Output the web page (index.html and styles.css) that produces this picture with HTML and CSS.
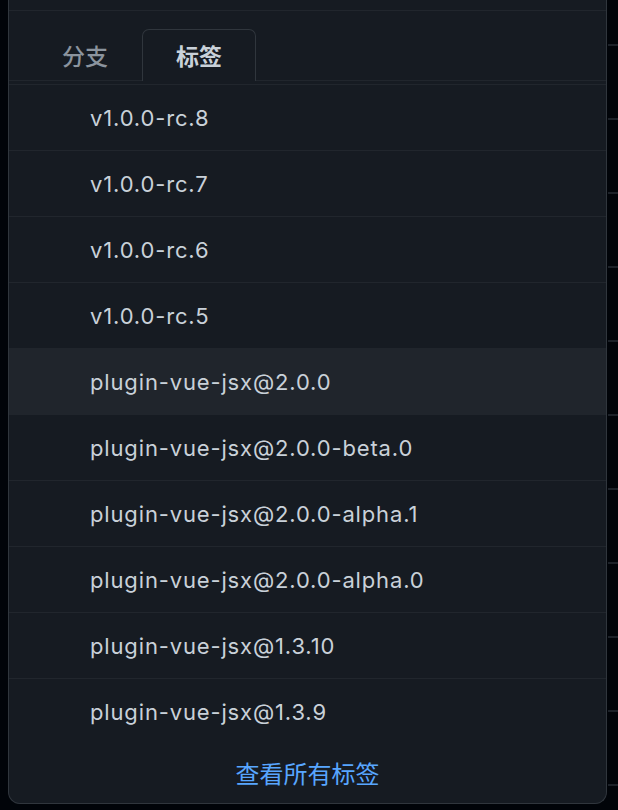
FILE: index.html
```html
<!DOCTYPE html>
<html lang="zh">
<head>
<meta charset="utf-8">
<title>标签</title>
<link rel="stylesheet" href="styles.css">
</head>
<body>
<div class="panel">
  <div class="panel-head"></div>
  <nav class="tabs">
    <button class="tab">分支</button>
    <button class="tab tab-selected">标签</button>
  </nav>
  <ul class="list">
    <li class="item">v1.0.0-rc.8</li>
    <li class="item">v1.0.0-rc.7</li>
    <li class="item">v1.0.0-rc.6</li>
    <li class="item">v1.0.0-rc.5</li>
    <li class="item item-hover">plugin-vue-jsx@2.0.0</li>
    <li class="item item-after-hover">plugin-vue-jsx@2.0.0-beta.0</li>
    <li class="item">plugin-vue-jsx@2.0.0-alpha.1</li>
    <li class="item">plugin-vue-jsx@2.0.0-alpha.0</li>
    <li class="item">plugin-vue-jsx@1.3.10</li>
    <li class="item">plugin-vue-jsx@1.3.9</li>
  </ul>
  <div class="footer"><a class="footer-link">查看所有标签</a></div>
</div>
</body>
</html>
```

FILE: styles.css
```css
html, body {
  margin: 0;
  padding: 0;
}
body {
  width: 618px;
  height: 810px;
  overflow: hidden;
  background-color: #010409;
  background-image: repeating-linear-gradient(to bottom, transparent 0 44px, #1c2128 44px 46px, transparent 46px 74px);
  background-size: 10px 810px;
  background-position: right top;
  background-repeat: no-repeat;
  font-family: "Inter", "Noto Sans CJK SC", sans-serif;
  -webkit-font-smoothing: antialiased;
}
.panel {
  margin-left: 8px;
  width: 597px;
  height: 803px;
  background: #161b22;
  border: 1px solid #30363d;
  border-top: none;
  border-radius: 0 0 12px 12px;
  display: flex;
  flex-direction: column;
}
.panel-head {
  height: 10px;
  border-bottom: 1px solid #21262d;
}
.tabs {
  display: flex;
  align-items: flex-end;
  height: 69px;
  padding-left: 19px;
  border-bottom: 1px solid #21262d;
}
.tab {
  width: 114px;
  height: 52px;
  box-sizing: border-box;
  margin-bottom: -1px;
  padding: 0 0 2px;
  background: transparent;
  border: 1px solid transparent;
  border-bottom: none;
  border-radius: 7px 7px 0 0;
  font-family: "Noto Sans CJK SC", sans-serif;
  font-size: 23px;
  font-weight: 500;
  color: #8b949e;
}
.tab-selected {
  background: #161b22;
  border-color: #30363d;
  color: #c9d1d9;
  font-weight: 700;
}
.list {
  list-style: none;
  margin: 3px 0 0;
  padding: 0;
}
.item {
  height: 65px;
  border-top: 1px solid #21262d;
  display: flex;
  align-items: center;
  padding-left: 81px;
  font-size: 22px;
  color: #c9d1d9;
  letter-spacing: 0.85px;
}
.item-hover {
  background: #20252c;
  border-top-color: #20252c;
}
.item-after-hover {
  border-top-color: #20252c;
}
.footer {
  flex: 1;
  display: flex;
  justify-content: center;
  align-items: center;
  padding-bottom: 2px;
}
.footer-link {
  font-family: "Noto Sans CJK SC", sans-serif;
  font-size: 24px;
  color: #58a6ff;
}
```
